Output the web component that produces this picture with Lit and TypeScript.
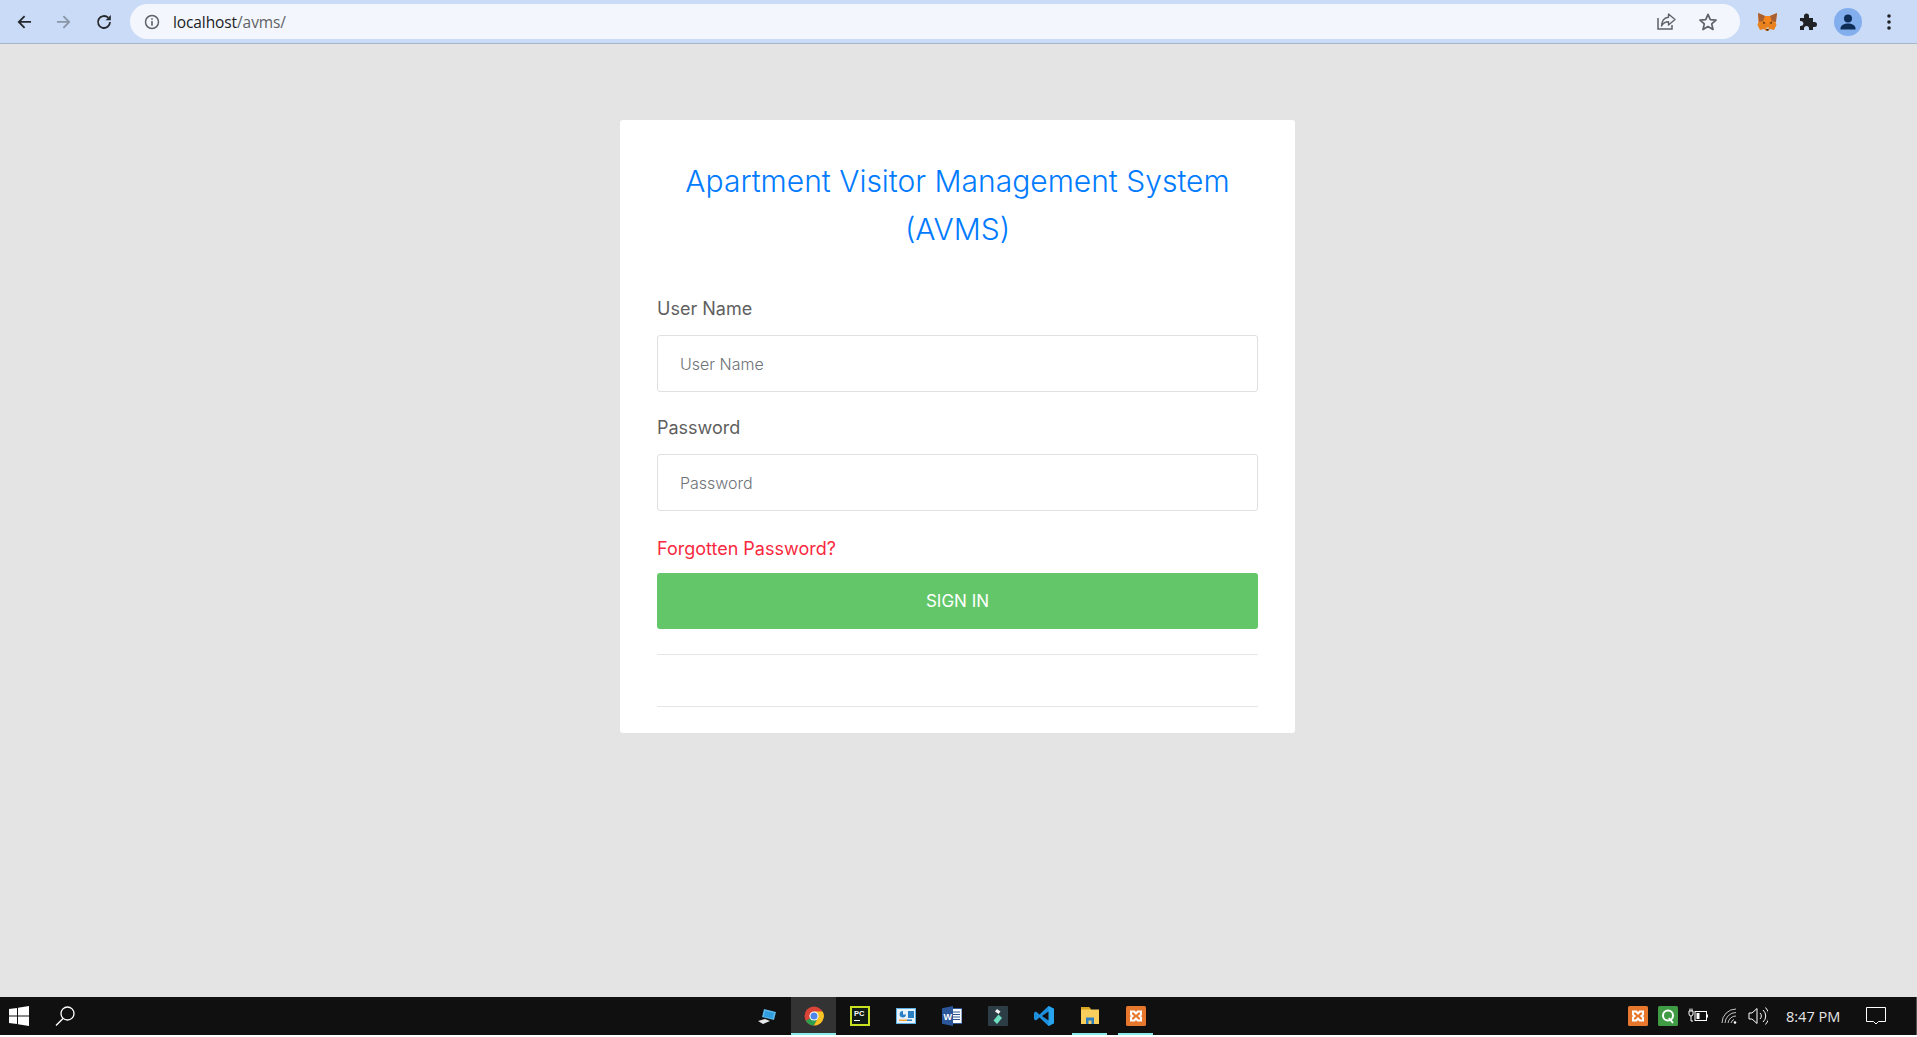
import { LitElement, css, html, svg } from "lit";
import { customElement } from "lit/decorators.js";

const back = svg`<path d="M16 8.9H4.5M9.6 3.2 3.8 9l5.8 5.8" fill="none" stroke="currentColor" stroke-width="1.8"/>`;
const forward = svg`<path d="M2 8.9h11.5M8.4 3.2 14.2 9l-5.8 5.8" fill="none" stroke="currentColor" stroke-width="1.8"/>`;

@customElement("app-root")
export class AppRoot extends LitElement {
  static styles = css`
    :host {
      display: flex;
      flex-direction: column;
      height: 1037px;
      overflow: hidden;
      background: #fff;
      font-family: Inter, "Liberation Sans", sans-serif;
    }
    svg { display: block; flex: none; }

    .toolbar {
      display: flex;
      align-items: center;
      height: 43px;
      flex: none;
      background: #c9dbf6;
      border-bottom: 1px solid #a9b6c9;
    }
    .nav { width: 18px; height: 18px; margin-left: 15px; color: #25282c; }
    .nav.off { margin-left: 22px; color: #8b97a8; }
    .nav.reload { margin-left: 22px; margin-right: 17px; }
    .omnibox {
      display: flex;
      align-items: center;
      width: 1610px;
      height: 35px;
      flex: none;
      box-sizing: border-box;
      padding: 0 10px 0 14px;
      border-radius: 18px;
      background: #f3f7fd;
    }
    .info { width: 16px; height: 16px; margin-right: 13px; color: #5f6368; }
    .url { font: 15.5px "Open Sans", sans-serif; color: #202124; letter-spacing: -0.1px; }
    .url span { color: #5f6368; }
    .share { margin-left: auto; width: 21px; height: 21px; margin-right: 21px; }
    .star { width: 20px; height: 20px; margin-right: 12px; }
    .fox { width: 21px; height: 20px; margin-left: 17px; }
    .puzzle { width: 19px; height: 19px; margin-left: 20px; }
    .avatar { width: 28px; height: 28px; margin-left: 17px; }
    .dots { width: 4px; height: 16px; margin-left: 25px; }

    main {
      flex: 1;
      background: #e4e4e4;
      padding-top: 76px;
      box-sizing: border-box;
    }
    .card {
      width: 675px;
      margin: 0 auto 0 620px;
      box-sizing: border-box;
      padding: 37px 37px 26px;
      background: #fff;
      border-radius: 3px;
    }
    h1 {
      margin: 0 0 42px;
      font-size: 30px;
      font-weight: 300;
      line-height: 48px;
      text-align: center;
      color: #007bff;
      letter-spacing: 0;
    }
    label {
      display: block;
      font-size: 18px;
      line-height: 27px;
      color: #5f5f5f;
      margin-bottom: 13px;
    }
    input {
      display: block;
      width: 100%;
      height: 57px;
      box-sizing: border-box;
      padding: 0 22px;
      margin-bottom: 22px;
      border: 1px solid #e0e0e0;
      border-radius: 3px;
      font: 300 16px Inter, sans-serif;
      outline: none;
    }
    input::placeholder { color: #6f7378; opacity: 1; }
    .forgot {
      display: block;
      margin: 0 0 9px;
      font-size: 18px;
      line-height: 31px;
      color: #f8283f;
      text-decoration: none;
    }
    button {
      display: block;
      width: 100%;
      height: 56px;
      padding: 0;
      border: 0;
      border-radius: 3px;
      background: #63c76a;
      color: #fff;
      font: 400 17px Inter, sans-serif;
    }
    hr { margin: 0; border: 0; border-top: 1px solid #e6e6e6; }
    hr.one { margin-top: 25px; }
    hr.two { margin-top: 51px; }

    .taskbar {
      display: flex;
      align-items: center;
      height: 38px;
      flex: none;
      background: #101010;
    }
    .start { display: flex; align-items: center; width: 745px; flex: none; }
    .win { width: 20px; height: 20px; margin-left: 9px; }
    .search { width: 22px; height: 22px; margin-left: 25px; }
    .apps { display: flex; height: 38px; }
    .app {
      position: relative;
      display: flex;
      align-items: center;
      justify-content: center;
      width: 46px;
      height: 38px;
    }
    .app svg { width: 20px; height: 20px; }
    .app.active { background: #333; width: 45px; margin-right: 1px; }
    .app.run::after, .app.active::after {
      content: "";
      position: absolute;
      left: 5px;
      right: 6px;
      bottom: 0;
      height: 2px;
      background: #8be9ec;
    }
    .app.active::after { left: 0; right: 0; }
    .tray { display: flex; align-items: center; height: 38px; margin-left: auto; color: #fff; }
    .tray svg { width: 20px; height: 20px; }
    .t1 { margin-right: 10px; }
    .t2 { margin-right: 10px; }
    .tray .t3 { margin-right: 13px; }
    .tray .t4 { width: 16px; margin-right: 11px; }
    .tray .t5 { margin-right: 18px; }
    .clock { font: 14.5px "Open Sans", sans-serif; color: #e6e6e6; width: 52px; white-space: nowrap; }
    .tray .note { margin-left: 28px; margin-right: 30px; }
    .show { width: 1px; height: 38px; background: #555; }
    .under { height: 2px; flex: none; background: #fff; }
  `;

  xampp() {
    return svg`<rect width="20" height="20" rx="1.5" fill="#e8772e"/>
      <path d="M5 5.5h3.2l1.8 2 1.8-2H15v3l-1.6 1.5L15 11.500v3h-3.200l-1.800-2-1.800 2H5v-3l1.600-1.500L5 8.500z" fill="none" stroke="#fff" stroke-width="2"/>`;
  }

  render() {
    return html`
      <div class="toolbar">
        <svg class="nav" viewBox="0 0 18 18">${back}</svg>
        <svg class="nav off" viewBox="0 0 18 18">${forward}</svg>
        <svg class="nav reload" viewBox="0 0 18 18">
          <path d="M15 9a6 6 0 1 1-1.800-4.300" fill="none" stroke="currentColor" stroke-width="1.800"/>
          <path d="M15.800 2v5.200h-5.200z" fill="currentColor"/>
        </svg>
        <div class="omnibox">
          <svg class="info" viewBox="0 0 16 16">
            <circle cx="8" cy="8" r="6.500" fill="none" stroke="currentColor" stroke-width="1.500"/>
            <path d="M7.200 7h1.600v4.800H7.200zM7.200 4.200h1.600v1.600H7.200z" fill="currentColor"/>
          </svg>
          <div class="url">localhost<span>/avms/</span></div>
          <svg class="share" viewBox="0 0 21 21">
            <path d="M2 7v11h14v-4" fill="none" stroke="#5f6368" stroke-width="1.500"/>
            <path d="M12.500 3 19 8.500 12.500 14v-3.200C9 10.800 7 12 5.500 15c.3-5 3-8.500 7-8.800z" fill="none" stroke="#5f6368" stroke-width="1.400" stroke-linejoin="round"/>
          </svg>
          <svg class="star" viewBox="0 0 20 20">
            <path d="M10 2.300l2.300 5.300 5.700.5-4.300 3.800 1.300 5.600-5-3-5 3 1.300-5.600L2 8.100l5.700-.5z" fill="none" stroke="#5f6368" stroke-width="1.700" stroke-linejoin="round"/>
          </svg>
        </div>
        <svg class="fox" viewBox="0 0 21 20">
          <path d="M1 1l7 3h5l7-3-1.500 9 1 3-2.500 5-4-1-2 2h-2l-2-2-4 1-2.500-5 1-3z" fill="#e8821e"/>
          <path d="M1 1l7 3-2 5-4 1zM20 1l-7 3 2 5 4 1z" fill="#a85f32"/>
          <path d="M8 4h5l1 5-3.500 3L7 9z" fill="#f6851b"/>
          <path d="M6 9.500l2.500 1.500-2 1zM15 9.500L12.500 11l2 1z" fill="#3d2a1c"/>
          <path d="M9 15.500h3l-.5 2h-2z" fill="#d8c8b8"/>
          <path d="M9.500 17h2v1.500h-2z" fill="#161616"/>
        </svg>
        <svg class="puzzle" viewBox="0 0 19 19">
          <path d="M2 6h4V4a2.500 2.500 0 0 1 5 0v2h4v4h1.500a2.500 2.500 0 0 1 0 5H15v3h-4v-1.500a2.500 2.500 0 0 0-5 0V18H2v-4h1a2.500 2.500 0 0 0 0-5H2z" fill="#202124"/>
        </svg>
        <svg class="avatar" viewBox="0 0 28 28">
          <circle cx="14" cy="14" r="14" fill="#83aeee"/>
          <circle cx="14" cy="10.500" r="4" fill="#0d2d57"/>
          <path d="M6.500 20.500c0-3.500 4-5 7.500-5s7.500 1.500 7.500 5v1h-15z" fill="#0d2d57"/>
        </svg>
        <svg class="dots" viewBox="0 0 4 16">
          <circle cx="2" cy="2" r="1.800" fill="#202124"/>
          <circle cx="2" cy="8" r="1.800" fill="#202124"/>
          <circle cx="2" cy="14" r="1.800" fill="#202124"/>
        </svg>
      </div>

      <main>
        <div class="card">
          <h1>Apartment Visitor Management System (AVMS)</h1>
          <label for="user">User Name</label>
          <input id="user" type="text" placeholder="User Name" />
          <label for="pass">Password</label>
          <input id="pass" type="password" placeholder="Password" />
          <a class="forgot" href="#">Forgotten Password?</a>
          <button>SIGN IN</button>
          <hr class="one" />
          <hr class="two" />
        </div>
      </main>

      <div class="taskbar">
        <div class="start">
          <svg class="win" viewBox="0 0 20 20">
            <path d="M0 3l8-1.100V9.500H0zM9 1.700 20 0v9.500H9zM0 10.500h8v7.600L0 17zM9 10.500h11V20L9 18.300z" fill="#fff"/>
          </svg>
          <svg class="search" viewBox="0 0 22 22">
            <circle cx="13.500" cy="8.500" r="6.500" fill="none" stroke="#fff" stroke-width="1.300"/>
            <path d="M9 13.500 2 20.500" stroke="#fff" stroke-width="1.500"/>
          </svg>
        </div>
        <div class="apps">
          <div class="app">
            <svg viewBox="0 0 20 20">
              <path d="M6 3l12 3-2 8-12-3z" fill="#5bb6e8"/>
              <path d="M7 5l9 2-1.500 5.500L6 10.500z" fill="#2f9fe0"/>
              <path d="M0 15l7-2 5 2-7 3z" fill="#e8e8e8"/>
            </svg>
          </div>
          <div class="app active">
            <svg viewBox="0 0 20 20">
              <circle cx="10" cy="10" r="9.500" fill="#db4437"/>
              <path d="M10 10 1.800 14.700A9.500 9.500 0 0 0 10 19.500L14 12z" fill="#2f9e4f"/>
              <path d="M10 5.500h8.700A9.500 9.500 0 0 1 10 19.500L14 12z" fill="#f7c325"/>
              <circle cx="10" cy="10" r="4.600" fill="#fff"/>
              <circle cx="10" cy="10" r="3.500" fill="#4f86e8"/>
            </svg>
          </div>
          <div class="app">
            <svg viewBox="0 0 20 20">
              <rect width="20" height="20" fill="#c8e021"/>
              <rect x="2" y="2" width="16" height="16" fill="#0f1a14"/>
              <text x="4" y="10" font-family="Liberation Sans" font-size="7.500" font-weight="700" fill="#fff">PC</text>
              <rect x="4" y="14" width="6" height="1" fill="#fff"/>
            </svg>
          </div>
          <div class="app">
            <svg viewBox="0 0 20 16" style="height:16px">
              <rect width="20" height="16" fill="#5cb2e4"/>
              <rect x="1" y="1" width="18" height="14" fill="#e8f2fa"/>
              <path d="M7 3a3.200 3.200 0 1 0 3 3.500H7z" fill="#2a7fc4"/>
              <rect x="12" y="3" width="6" height="7" fill="#2a7fc4"/>
              <rect x="3" y="11.500" width="8" height="1.500" fill="#f2a33c"/>
              <rect x="11" y="11.500" width="5" height="1.500" fill="#2a7fc4"/>
            </svg>
          </div>
          <div class="app">
            <svg viewBox="0 0 20 20">
              <rect x="8" y="2.500" width="12" height="15" fill="#fff" stroke="#2b5797"/>
              <path d="M11 6h7M11 8.500h7M11 11h7M11 13.500h7" stroke="#2b5797"/>
              <path d="M0 2.200 11 0v20L0 17.800z" fill="#2b579a"/>
              <text x="1.500" y="13.500" font-family="Liberation Sans" font-size="9" font-weight="700" fill="#fff">W</text>
            </svg>
          </div>
          <div class="app">
            <svg viewBox="0 0 20 20">
              <rect width="20" height="20" rx="1" fill="#2d3d45"/>
              <path d="M10.500 8.500 14 12l-5 6-3.500-3.500z" fill="#6ee0c0"/>
              <path d="M9 3l3.500 2.500L10.500 8 7 5.500z" fill="#f2f2f2"/>
            </svg>
          </div>
          <div class="app">
            <svg viewBox="0 0 20 20">
              <path d="M14.500 0 20 2.700v14.600L14.500 20 5.500 11.500 2 14.500 0 13.300v-6.600L2 5.500l3.500 3z" fill="#1d8fdc"/>
              <path d="M14.500 0 20 2.700v14.600L14.500 20z" fill="#26a5ee"/>
              <path d="M14.500 5.500 8 10l6.500 4.500z" fill="#101010"/>
            </svg>
          </div>
          <div class="app run">
            <svg viewBox="0 0 20 20">
              <path d="M1 1h8l2 2.500h8V18H1z" fill="#f8cf5c"/>
              <path d="M1 1h8l2 2.500H1z" fill="#d9a520"/>
              <path d="M6 18v-6.500h8V18h-2.500v-3.500h-3V18z" fill="#2a7fc4"/>
            </svg>
          </div>
          <div class="app run">
            <svg viewBox="0 0 20 20">${this.xampp()}</svg>
          </div>
        </div>
        <div class="tray">
          <svg class="t1" viewBox="0 0 20 20">${this.xampp()}</svg>
          <svg class="t2" viewBox="0 0 20 20">
            <rect width="20" height="20" rx="1.500" fill="#3f9c45"/>
            <circle cx="10" cy="9.500" r="5" fill="none" stroke="#fff" stroke-width="2"/>
            <path d="M11 12l4 5" stroke="#fff" stroke-width="2"/>
          </svg>
          <svg class="t3" viewBox="0 0 20 20">
            <path d="M1 5v3a2 2 0 0 0 4 0V5zM2 5V2.500M4 5V2.500M3 10v5h2" fill="none" stroke="#fff" stroke-width="1"/>
            <rect x="7" y="5.500" width="11.500" height="9" fill="none" stroke="#fff"/>
            <rect x="8.500" y="7" width="3" height="6" fill="#fff"/>
            <rect x="18.500" y="8.500" width="1.500" height="3" fill="#fff"/>
          </svg>
          <svg class="t4" viewBox="0 0 16 20">
            <path d="M1 17a14 14 0 0 1 14-14M4 17A11 11 0 0 1 15 6.500M7 17a8 8 0 0 1 8-7M10 17a5 5 0 0 1 3-3.500" fill="none" stroke="#d8d8d8" stroke-width=".9"/>
            <circle cx="14" cy="16.500" r="1.300" fill="#fff"/>
          </svg>
          <svg class="t5" viewBox="0 0 20 20">
            <path d="M1 7h3l5-4.500v15L4 13H1z" fill="none" stroke="#fff"/>
            <path d="M12 7a4 4 0 0 1 0 6M15 4a8 8 0 0 1 0 12M17.500 1.500a12 12 0 0 1 0 17" fill="none" stroke="#fff"/>
          </svg>
          <div class="clock">8:47 PM</div>
          <svg class="note" viewBox="0 0 20 20">
            <path d="M.5 1.500h19v14h-7l-2.500 2.500-2.500-2.500h-7z" fill="none" stroke="#fff"/>
          </svg>
          <div class="show"></div>
        </div>
      </div>
      <div class="under"></div>
    `;
  }
}
